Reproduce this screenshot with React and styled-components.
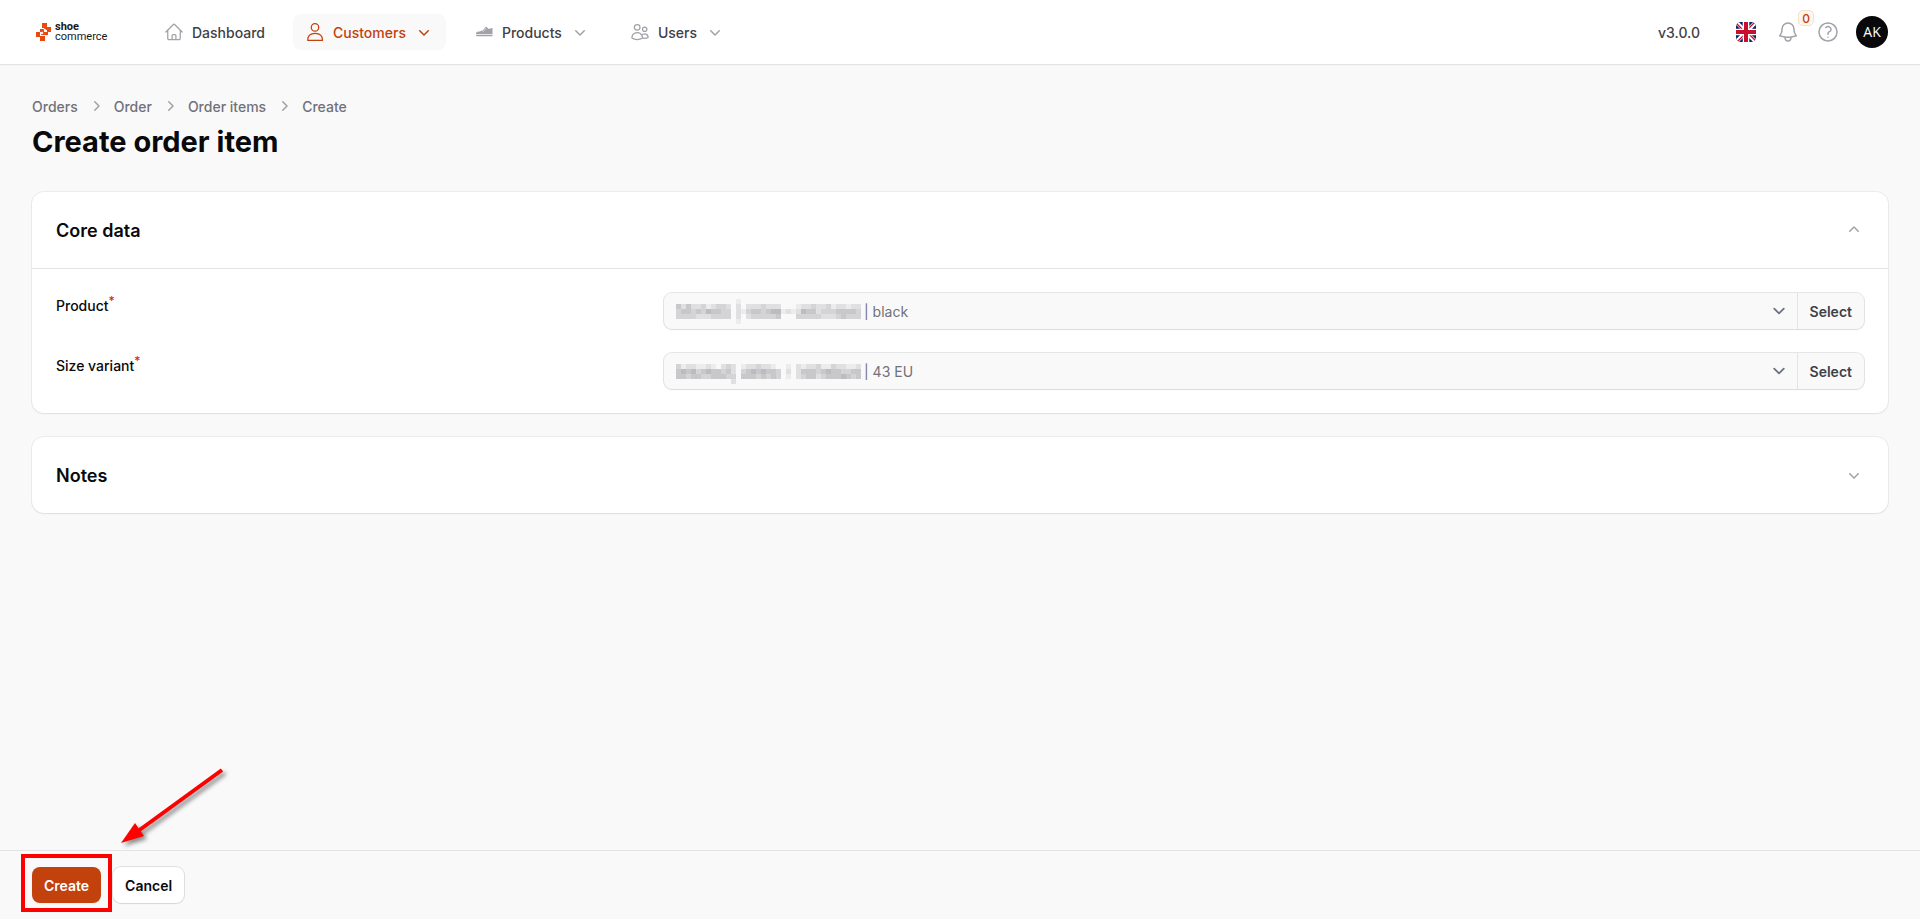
import React, { useState } from "react"
import styled, { createGlobalStyle } from "styled-components"
import {
  HiMiniChevronDown,
  HiMiniChevronRight,
  HiMiniChevronUp,
  HiOutlineBell,
  HiOutlineHome,
  HiOutlineQuestionMarkCircle,
  HiOutlineUsers
} from "react-icons/hi2"

// Redacted product names, one digit per 5px cell, 0 is empty
const mosaics = {
  product: [
    "0000000000001000000000000000000000000",
    "4242231233202022232220001223223122122",
    "3443435443302134434551212544233344443",
    "3333222333302023333340003333322234333",
    "0000000000001000000000000000000000000"
  ],
  size: [
    "0000000000000000000000000000000000000",
    "3122112102320122322100102122311322112",
    "4545345443420345454430202444345443344",
    "4434433444330444343430102344234445434",
    "0000000000020000000000000000000000000"
  ]
}

const UserIcon = () => (
  <svg viewBox="0 0 20 20" fill="none" stroke="currentColor" strokeWidth="1.25">
    <circle cx="10" cy="5.4" r="3.7" />
    <path
      strokeLinejoin="round"
      d="M2.7 18.3c0-4.4 3-6.9 7.4-6.9s7.4 2.5 7.4 6.9z"
    />
  </svg>
)

const ShoeIcon = () => (
  <svg viewBox="0 0 20 20" fill="currentColor">
    <path d="M2 12c0-1.700 1-2.200 2.500-2.400 1.800-.2 3.100-.7 4.300-1.600L11.300 5.300l1.700-.5c.3 1.500 1.200 2.200 2.400 2 .8-.1 1.500-.4 2.200-.9l.9.4V12z" />
    <path d="M2 12.7h16.600v.8c0 .5-.3.8-.8.8H3.200c-.8 0-1.200-.5-1.200-1z" />
    <path
      d="M8 8.500l1.800.9M9.200 7.400l1.800.9M10.400 6.300l1.800.9"
      stroke="#fff"
      strokeWidth=".6"
    />
  </svg>
)

const Flag = () => (
  <svg viewBox="0 0 20 20">
    <path fill="#012169" d="M0 0h20v20H0z" />
    <path stroke="#fff" strokeWidth="4" d="M0 0l20 20M20 0L0 20" />
    <path
      stroke="#c8102e"
      strokeWidth="1.4"
      d="M-1 0l10 10M20 -1L10 9M11 10l10 10M10 11L0 21"
    />
    <path stroke="#fff" strokeWidth="6.6" d="M10 0v20M0 10h20" />
    <path stroke="#c8102e" strokeWidth="4" d="M10 0v20M0 10h20" />
  </svg>
)

const Mark = () => (
  <svg width="16" height="18" viewBox="0 0 16 18" fill="#e8490f">
    <path d="M6 0h5v4h4v5h-4V5H6zM0 9h4v4h5v5H4v-4H0z" />
    <path d="M4 6h4v3H4zM8 9h4v3H8zM5 9h3v3H5zM8 5h3v2H8z" />
    <path
      fill="#fff"
      d="M8.500 5.500l2 1.500-1.500 1.500-1.500-1.500zM6 8.500l1.500 1.500L6 11.500 4.500 10z"
    />
  </svg>
)

const SelectArrow = () => (
  <ArrowIcon viewBox="0 0 20 20" fill="none" stroke="#6b7280">
    <path
      strokeLinecap="round"
      strokeLinejoin="round"
      strokeWidth="1.5"
      d="M6 8l4 4 4-4"
    />
  </ArrowIcon>
)

const Mosaic = ({ rows }) => (
  <svg width="188" height="26" viewBox="0 0 188 26" shapeRendering="crispEdges">
    {rows.map((row, y) =>
      row
        .split("")
        .map((level, x) =>
          level === "0" ? null : (
            <rect
              key={`${x}-${y}`}
              x={x * 5}
              y={y * 5 + 1}
              width="5"
              height="5"
              fill="#71717a"
              opacity={level * 0.09}
            />
          )
        )
    )}
  </svg>
)

const nav = [
  { label: "Dashboard", icon: <HiOutlineHome /> },
  { label: "Customers", icon: <UserIcon />, active: true, menu: true },
  { label: "Products", icon: <ShoeIcon />, menu: true },
  { label: "Users", icon: <HiOutlineUsers />, menu: true }
]

const Section = ({ title, initial, children }) => {
  const [open, setOpen] = useState(initial)
  return (
    <Card>
      <CardHeader>
        <CardTitle>{title}</CardTitle>
        <Toggle aria-label={`Toggle ${title}`} onClick={() => setOpen(!open)}>
          {open ? <HiMiniChevronUp /> : <HiMiniChevronDown />}
        </Toggle>
      </CardHeader>
      {open && children && <Fields>{children}</Fields>}
    </Card>
  )
}

const Field = ({ id, label, value, rows }) => (
  <Row>
    <Label htmlFor={id}>
      {label}
      <Required>*</Required>
    </Label>
    <Group>
      <Mosaic rows={rows} />
      <SelectWrap>
        <Select id={id} defaultValue={value}>
          <option>{value}</option>
        </Select>
        <SelectArrow />
      </SelectWrap>
      <Suffix type="button">Select</Suffix>
    </Group>
  </Row>
)

export default function App() {
  return (
    <Page>
      <GlobalStyle />
      <Topbar>
        <Logo href="#">
          <Mark />
          <LogoText>
            <strong>shoe</strong>
            <span>commerce</span>
          </LogoText>
        </Logo>
        <Nav>
          {nav.map(item => (
            <NavItem key={item.label} href="#" $active={item.active}>
              {item.icon}
              <Caption>{item.label}</Caption>
              {item.menu && <HiMiniChevronDown />}
            </NavItem>
          ))}
        </Nav>
        <Version>v3.0.0</Version>
        <Tools>
          <FlagButton aria-label="Language">
            <Flag />
          </FlagButton>
          <IconButton aria-label="Notifications">
            <HiOutlineBell />
            <Badge>0</Badge>
          </IconButton>
          <IconButton aria-label="Help">
            <HiOutlineQuestionMarkCircle />
          </IconButton>
          <Avatar>AK</Avatar>
        </Tools>
      </Topbar>
      <Main>
        <Header>
          <Breadcrumbs>
            <a href="#">Orders</a>
            <HiMiniChevronRight />
            <a href="#">Order</a>
            <HiMiniChevronRight />
            <a href="#">Order items</a>
            <HiMiniChevronRight />
            <span>Create</span>
          </Breadcrumbs>
          <Title>Create order item</Title>
        </Header>
        <Sections>
          <Section title="Core data" initial>
            <Field
              id="product"
              label="Product"
              value="| black"
              rows={mosaics.product}
            />
            <Field
              id="size"
              label="Size variant"
              value="| 43 EU"
              rows={mosaics.size}
            />
          </Section>
          <Section title="Notes" />
        </Sections>
      </Main>
      <Footer>
        <Highlight>
          <Button $primary>Create</Button>
          <Arrow viewBox="0 0 120 90">
            <path d="M108 9L20 73" stroke="#f00" strokeWidth="4" />
            <path d="M7 82l14-20 9 13z" fill="#f00" />
          </Arrow>
        </Highlight>
        <Button>Cancel</Button>
      </Footer>
    </Page>
  )
}

const GlobalStyle = createGlobalStyle`
  * {
    box-sizing: border-box;
  }

  body {
    margin: 0;
    background: #f9f9f9;
    color: #09090b;
    font-family: Inter, sans-serif;
    font-size: 14px;
    line-height: 20px;
    -webkit-font-smoothing: antialiased;
  }

  a {
    color: inherit;
    text-decoration: none;
  }

  button,
  select {
    margin: 0;
    padding: 0;
    border: 0;
    background: none;
    color: inherit;
    font: inherit;
  }

  svg {
    display: block;
    flex-shrink: 0;
  }
`

const Page = styled.div`
  display: flex;
  flex-direction: column;
  min-height: 100vh;
`

const Topbar = styled.header`
  display: flex;
  align-items: center;
  height: 64px;
  padding: 0 32px;
  background: #fff;
  box-shadow: 0 0 0 1px rgba(9, 9, 11, 0.05), 0 1px 2px rgba(0, 0, 0, 0.06);
`

const Logo = styled.a`
  display: flex;
  align-items: center;
  gap: 3px;
  width: 80px;
  margin-right: 40px;
  padding-left: 4px;
`

const LogoText = styled.span`
  display: flex;
  flex-direction: column;
  font-family: Roboto, sans-serif;
  font-size: 11px;
  line-height: 10px;
  color: #18181b;
`

const Nav = styled.nav`
  display: flex;
  gap: 16px;
`

const NavItem = styled.a`
  display: flex;
  align-items: center;
  gap: 8px;
  height: 36px;
  padding: 0 12px;
  border-radius: 8px;
  font-weight: 500;
  color: ${props => (props.$active ? "#c2410c" : "#3f3f46")};
  background: ${props => (props.$active ? "#f9f9f9" : "transparent")};

  svg {
    width: 20px;
    height: 20px;
    color: ${props => (props.$active ? "#c2410c" : "#a1a1aa")};
  }
`

const Caption = styled.span`
  padding-top: 2px;
`

const Version = styled(Caption)`
  margin-left: auto;
  margin-right: 36px;
  color: #3f3f46;
  font-weight: 500;
`

const Tools = styled.div`
  display: flex;
  align-items: center;
  gap: 16px;
`

const FlagButton = styled.button`
  width: 20px;
  height: 20px;
  margin-right: 4px;
  border-radius: 5px;
  overflow: hidden;
`

const IconButton = styled.button`
  position: relative;
  color: #a1a1aa;

  svg {
    width: 24px;
    height: 24px;
  }
`

const Badge = styled.span`
  position: absolute;
  left: 22px;
  top: -10px;
  width: 16px;
  height: 16px;
  border: 1px solid #fbdccd;
  border-radius: 5px;
  background: #fff6f0;
  color: #c2410c;
  font-size: 12px;
  font-weight: 500;
  line-height: 16px;
`

const Avatar = styled.button`
  width: 32px;
  height: 32px;
  border-radius: 50%;
  background: #09090b;
  color: #fff;
  font-family: "Open Sans", sans-serif;
  font-size: 14px;
`

const Main = styled.main`
  flex: 1;
  padding: 32px;
`

const Header = styled.div`
  display: flex;
  flex-direction: column;
  gap: 8px;
  margin-bottom: 32px;
`

const Breadcrumbs = styled.nav`
  display: flex;
  gap: 8px;
  height: 20px;
  line-height: 22px;
  color: #71717a;
  font-weight: 500;

  svg {
    width: 20px;
    height: 20px;
    color: #a1a1aa;
  }
`

const Title = styled.h1`
  margin: 0;
  font-size: 29px;
  line-height: 36px;
  font-weight: 700;
`

const Sections = styled.div`
  display: flex;
  flex-direction: column;
  gap: 24px;
`

const Card = styled.section`
  border-radius: 12px;
  background: #fff;
  box-shadow: 0 0 0 1px rgba(9, 9, 11, 0.05), 0 1px 2px rgba(0, 0, 0, 0.06);
`

const CardHeader = styled.div`
  display: flex;
  align-items: center;
  justify-content: space-between;
  height: 76px;
  padding: 0 24px;
`

const CardTitle = styled.h2`
  margin: 0;
  padding-top: 2px;
  font-size: 18px;
  line-height: 28px;
  font-weight: 600;
`

const Toggle = styled.button`
  color: #a1a1aa;

  svg {
    width: 20px;
    height: 20px;
  }
`

const Fields = styled.div`
  display: flex;
  flex-direction: column;
  gap: 24px;
  padding: 24px;
  border-top: 1px solid #e4e4e7;
`

const Row = styled.div`
  display: grid;
  grid-template-columns: repeat(3, 1fr);
  column-gap: 16px;
`

const Label = styled.label`
  line-height: 26px;
  font-weight: 500;
`

const Required = styled.sup`
  color: #dc2626;
  font-size: 12px;
  line-height: 0;
`

const Group = styled.div`
  display: flex;
  align-items: center;
  grid-column: span 2;
  height: 36px;
  padding-left: 12px;
  border-radius: 8px;
  background: #f9f9f9;
  box-shadow: 0 0 0 1px rgba(9, 9, 11, 0.1), 0 1px 2px rgba(0, 0, 0, 0.05);
`

const SelectWrap = styled.div`
  position: relative;
  flex: 1;
`

const Select = styled.select`
  display: block;
  width: 100%;
  height: 36px;
  padding-top: 2px;
  appearance: none;
  color: #71717a;
`

const ArrowIcon = styled.svg`
  position: absolute;
  right: 6px;
  top: 6px;
  width: 24px;
  height: 24px;
  pointer-events: none;
`

const Suffix = styled.button`
  height: 36px;
  padding: 2px 12px 0;
  border-left: 1px solid #e4e4e7;
  color: #3f3f46;
  font-weight: 600;
`

const Footer = styled.footer`
  position: sticky;
  bottom: 0;
  display: flex;
  gap: 12px;
  padding: 16px 32px;
  border-top: 1px solid #e4e4e7;
  background: #f9f9f9;
`

const Highlight = styled.div`
  position: relative;

  &::after {
    content: "";
    position: absolute;
    inset: -13px -11px -9px;
    border: 4px solid #f00;
    pointer-events: none;
  }
`

const Arrow = styled.svg`
  position: absolute;
  left: 82px;
  bottom: 52px;
  width: 120px;
  height: 90px;
  overflow: visible;
  filter: drop-shadow(3px 3px 2px rgba(0, 0, 0, 0.45));
  pointer-events: none;
`

const Button = styled.button`
  height: 36px;
  padding: 2px 12px 0;
  border-radius: 8px;
  font-weight: 600;
  color: ${props => (props.$primary ? "#fff" : "#09090b")};
  background: ${props => (props.$primary ? "#c2410c" : "#fff")};
  box-shadow: ${props =>
    props.$primary
      ? "0 1px 2px rgba(0, 0, 0, 0.05)"
      : "0 0 0 1px rgba(9, 9, 11, 0.1), 0 1px 2px rgba(0, 0, 0, 0.05)"};
`
